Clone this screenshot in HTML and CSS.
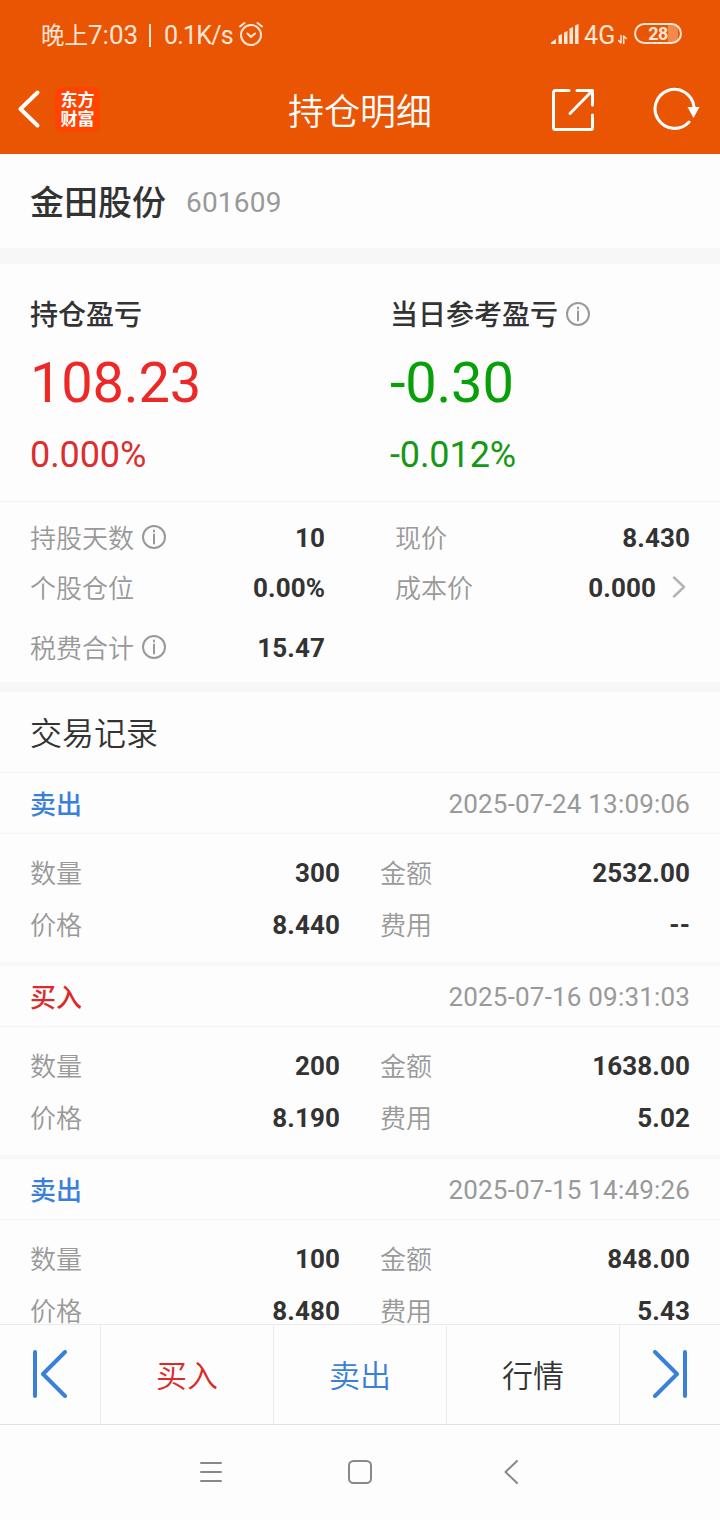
FILE: index.html
```html
<!DOCTYPE html>
<html lang="zh-CN">
<head>
<meta charset="utf-8">
<title>持仓明细</title>
<link rel="stylesheet" href="styles.css">
</head>
<body>
<div class="screen">
  <header class="top">
    <div class="status">
      <span class="clock">晚上<em>7:03</em></span><i class="pipe"></i><span class="speed">0.1K/s</span>
      <svg class="alarm" width="26" height="26" viewBox="0 0 26 26"><circle cx="13" cy="14" r="10"/><path d="M9.500 12.500l3.500 3.500 4-3.500M2 5.500l4.500-3.500M24 5.500L19.500 2"/></svg>
      <svg class="signal" width="28" height="20" viewBox="0 0 28 20"><path d="M0 20v-1.500L5 15v5zM7.500 20v-8.500l3.500-1.500v10zM13 20V8.500L16.500 7v13zM18.500 20V4.500L22 3v17zM24 20V1.500L27.500 0v20z"/></svg>
      <span class="net">4G</span>
      <svg class="updown" width="9" height="9" viewBox="0 0 9 9"><path d="M3 .5v7.500L.5 5.500M5.700 8.500V1l2.500 2.500"/></svg>
      <span class="battery">28</span>
    </div>
    <div class="bar">
      <svg class="back" width="24" height="40" viewBox="0 0 24 40"><path d="M20.500 3.500L3.500 20l17 16.500"/></svg>
      <div class="logo"><span>东方</span><span>财富</span></div>
      <h1 class="title">持仓明细</h1>
      <svg class="share" width="44" height="44" viewBox="0 0 44 44"><path d="M18 2.500H4.500a2 2 0 0 0-2 2v35a2 2 0 0 0 2 2h35a2 2 0 0 0 2-2V27M26 2.500h15.500V17M41 3L19 25.500"/></svg>
      <svg class="reload" width="50" height="44" viewBox="0 0 50 44"><path class="arc" d="M37 35A19.500 19.500 0 1 1 42 20"/><path class="tip" d="M35.500 20h12l-6 11z"/></svg>
    </div>
  </header>

  <main class="content">
    <section class="stock"><h2 class="name">金田股份</h2><span class="code">601609</span></section>

    <section class="profit">
      <div class="profit-col up">
        <div class="profit-label">持仓盈亏</div>
        <div class="amount">108.23</div>
        <div class="percent">0.000%</div>
      </div>
      <div class="profit-col down">
        <div class="profit-label">当日参考盈亏<svg class="info" width="24" height="24" viewBox="0 0 24 24"><circle cx="12" cy="12" r="11"/><path d="M12 9.500v9M12 5.500v1"/></svg></div>
        <div class="amount">-0.30</div>
        <div class="percent">-0.012%</div>
      </div>
    </section>

    <section class="stats">
      <div class="stat"><span>持股天数</span><svg class="info" width="24" height="24" viewBox="0 0 24 24"><circle cx="12" cy="12" r="11"/><path d="M12 9.500v9M12 5.500v1"/></svg><b>10</b></div>
      <div class="stat"><span>现价</span><b>8.430</b></div>
      <div class="stat"><span>个股仓位</span><b>0.00%</b></div>
      <div class="stat"><span>成本价</span><b>0.000</b><svg class="more" width="14" height="22" viewBox="0 0 14 22"><path d="M2 1.500L12 11 2 20.500"/></svg></div>
      <div class="stat"><span>税费合计</span><svg class="info" width="24" height="24" viewBox="0 0 24 24"><circle cx="12" cy="12" r="11"/><path d="M12 9.500v9M12 5.500v1"/></svg><b>15.47</b></div>
    </section>

    <h3 class="list-title">交易记录</h3>

    <article class="record">
      <div class="record-head"><span class="side sell">卖出</span><time>2025-07-24 13:09:06</time></div>
      <div class="record-body">
        <div class="cell"><span>数量</span><b>300</b></div><div class="cell"><span>金额</span><b>2532.00</b></div>
        <div class="cell"><span>价格</span><b>8.440</b></div><div class="cell"><span>费用</span><b>--</b></div>
      </div>
    </article>
    <article class="record">
      <div class="record-head"><span class="side buy">买入</span><time>2025-07-16 09:31:03</time></div>
      <div class="record-body">
        <div class="cell"><span>数量</span><b>200</b></div><div class="cell"><span>金额</span><b>1638.00</b></div>
        <div class="cell"><span>价格</span><b>8.190</b></div><div class="cell"><span>费用</span><b>5.02</b></div>
      </div>
    </article>
    <article class="record">
      <div class="record-head"><span class="side sell">卖出</span><time>2025-07-15 14:49:26</time></div>
      <div class="record-body">
        <div class="cell"><span>数量</span><b>100</b></div><div class="cell"><span>金额</span><b>848.00</b></div>
        <div class="cell"><span>价格</span><b>8.480</b></div><div class="cell"><span>费用</span><b>5.43</b></div>
      </div>
    </article>
  </main>

  <footer class="actions">
    <div class="action"><svg class="step" width="36" height="48" viewBox="0 0 36 48"><path d="M3 2v44M33 2L11 24l22 22"/></svg></div>
    <div class="action buy">买入</div>
    <div class="action sell">卖出</div>
    <div class="action">行情</div>
    <div class="action"><svg class="step" width="36" height="48" viewBox="0 0 36 48"><path d="M33 2v44M3 2l22 22L3 46"/></svg></div>
  </footer>

  <nav class="system">
    <svg width="24" height="24" viewBox="0 0 24 24"><path d="M2 3h20M2 12h20M2 21h20"/></svg>
    <svg width="26" height="26" viewBox="0 0 26 26"><rect x="2" y="2" width="22" height="22" rx="4.500"/></svg>
    <svg width="16" height="26" viewBox="0 0 16 26"><path d="M14 2L2.500 13 14 24"/></svg>
  </nav>
</div>
</body>
</html>
```

FILE: styles.css
```css
* { box-sizing: border-box; }
body { margin: 0; background: #fdfdfd; color: #333; font-family: Roboto, "Noto Sans CJK SC", sans-serif; }
h1, h2, h3 { margin: 0; font-weight: 400; }
svg { display: block; flex: none; fill: none; stroke-linecap: round; stroke-linejoin: round; }
.screen { width: 720px; height: 1520px; display: flex; flex-direction: column; overflow: hidden; }

.top { height: 154px; flex: none; background: #ea5504; color: #fff; }
.status { height: 68px; padding: 2px 38px 0 41px; display: flex; align-items: center; font-size: 25px; line-height: 30px; color: #fde6d8; }
.status svg { stroke: #fde6d8; stroke-width: 2; }
.clock { width: 98px; padding-top: 1px; font-size: 23.500px; white-space: nowrap; }
.clock em { font-size: 26px; font-style: normal; }
.pipe { width: 2px; height: 23px; margin: 0 13px 0 10px; background: #fde6d8; }
.speed { width: 69px; padding-top: 1px; letter-spacing: -.8px; white-space: nowrap; }
.alarm { margin: -3px 0 0 5px; }
.status .signal { margin: -3px 0 0 auto; stroke: none; fill: #fde6d8; }
.net { margin-left: 5px; width: 34px; padding-top: 1px; letter-spacing: .3px; }
.status .updown { margin: 8px 7px 0 0; stroke-width: 1.500; }
.battery { width: 48px; height: 21px; margin-top: -3px; border: 2px solid #fde6d8; border-radius: 11px; font-size: 18px; line-height: 17px; font-weight: 700; letter-spacing: -.5px; text-align: center; background: linear-gradient(90deg, transparent 32px, #f28a4e 32px 42px, transparent 42px); }

.bar { height: 84px; padding: 0 18px 2px 17px; display: flex; align-items: center; }
.back { stroke: #fff; stroke-width: 4; }
.logo { width: 45px; height: 45px; margin-left: 14px; padding-top: 2px; border-radius: 8px; background: #ff4400; font: 700 17px/19px "Noto Sans CJK SC", sans-serif; display: flex; flex-direction: column; align-items: center; }
.title { margin-left: 188px; padding-top: 7px; font-size: 36px; line-height: 48px; font-weight: 350; }
.share { margin: 1px 0 0 119px; stroke: #fff; stroke-width: 3; }
.reload { margin-left: auto; }
.arc { stroke: #fff; stroke-width: 3; }
.tip { fill: #fff; }

.content { flex: none; height: 1170px; overflow: hidden; }
.stock { height: 110px; padding: 4px 31px 0 30px; border-bottom: 16px solid #f6f7f9; display: flex; align-items: center; gap: 20px; }
.name { font-size: 34px; line-height: 40px; font-weight: 500; }
.code { font-size: 28px; letter-spacing: .2px; line-height: 40px; color: #999; }

.profit { height: 238px; padding: 30px 0 0 30px; border-bottom: 1px solid #f5f5f5; display: grid; grid-template-columns: 360px 1fr; }
.profit-label { height: 40px; padding-top: 4px; display: flex; align-items: center; gap: 8px; font-size: 28px; line-height: 36px; font-weight: 500; }
.profit-label .info { margin-top: -5px; }
.info { stroke: #999; stroke-width: 2; }
.amount { margin-top: 14px; font-size: 56px; line-height: 70px; letter-spacing: -.2px; }
.percent { margin-top: 13px; font-size: 36px; line-height: 48px; letter-spacing: -.1px; }
.up .amount { color: #ee2727; }
.up .percent { color: #db2e2e; }
.down .amount { color: #07a007; }
.down .percent { color: #159815; }

.stats { height: 190px; padding: 11px 30px 0; border-bottom: 10px solid #f6f7f9; display: grid; grid-template-columns: 295px 295px; grid-template-rows: 50px 50px 70px; column-gap: 70px; }
.stat, .cell { display: flex; align-items: center; font-size: 26px; line-height: 36px; }
.stat span, .cell span { padding-top: 2px; color: #999; font-weight: 350; }
.stat b, .cell b { margin-left: auto; font-weight: 700; letter-spacing: .1px; }
.stat .info { margin: -2px 0 0 8px; }
.more { margin: -2px 4px 0 16px; stroke: #b5b5b5; stroke-width: 2.500; }

.list-title { height: 81px; padding: 3px 30px 0; border-bottom: 1px solid #f4f4f4; font-size: 32px; line-height: 79px; font-weight: 350; }
.record { border-bottom: 4px solid #f6f7f9; }
.record-head { height: 61px; padding: 1px 30px 0; border-bottom: 1px solid #f4f4f4; display: flex; align-items: center; justify-content: space-between; font-size: 26px; line-height: 36px; }
.record-head time { margin-right: -.2px; letter-spacing: .2px; color: #999; }
.side { padding-top: 2px; font-weight: 500; }
.buy { color: #dc2a2a; }
.sell { color: #3a80da; }
.record-body { height: 128px; padding: 13px 30px 0; display: grid; grid-template-columns: 310px 310px; grid-template-rows: 52px 52px; column-gap: 40px; }

.actions { height: 101px; flex: none; border-top: 1px solid #eaeaea; border-bottom: 1px solid #e2e2e2; display: grid; grid-template-columns: 100px 173px 173px 173px 101px; }
.action { padding-top: 5px; display: flex; align-items: center; justify-content: center; font-size: 31px; line-height: 40px; font-weight: 350; border-left: 1px solid #ebebeb; }
.action:first-child { border-left: 0; }
.step { margin-top: -7px; stroke: #3a80da; stroke-width: 4; }
.system { flex: 1; padding: 0 0 2px 199px; display: flex; align-items: center; gap: 124px; }
.system svg { stroke: #888; stroke-width: 2; }
.system svg:last-child { margin-left: 6px; }
```
